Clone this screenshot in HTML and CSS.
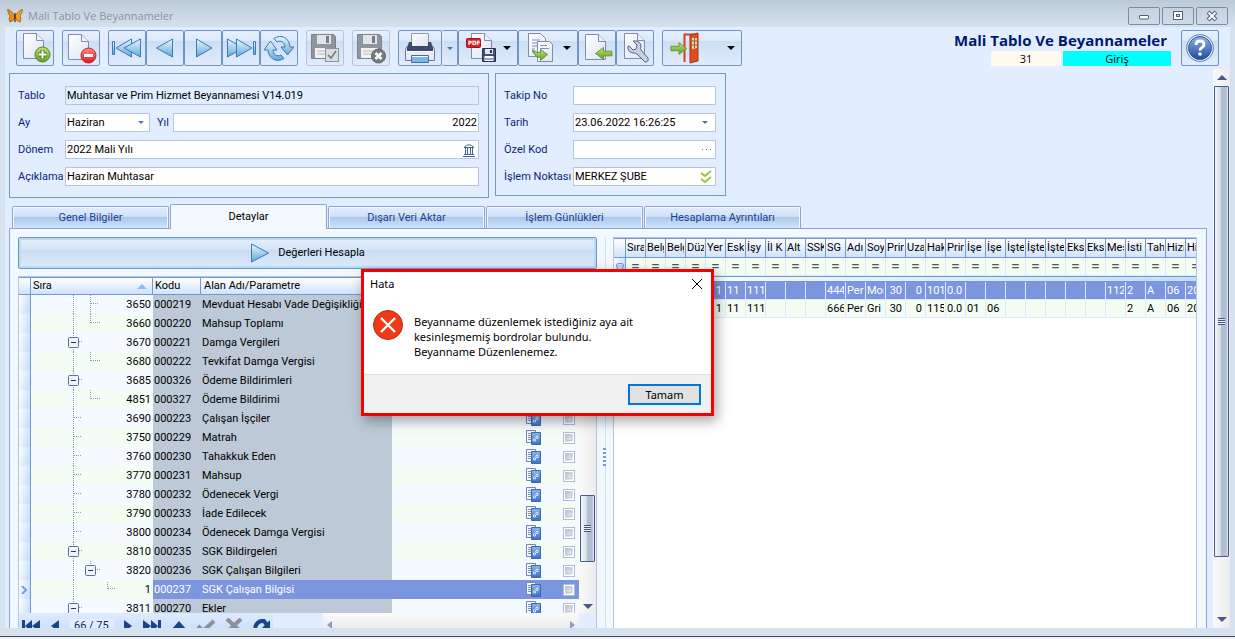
FILE: index.html
```html
<!DOCTYPE html>
<html lang="tr">
<head>
<meta charset="utf-8">
<title>Mali Tablo Ve Beyannameler</title>
<link rel="stylesheet" href="styles.css">
</head>
<body>
<svg class="defs" aria-hidden="true">
  <defs>
    <linearGradient id="gBlue" x1="0" y1="0" x2="0" y2="1"><stop offset="0" stop-color="#e6f6fe"/><stop offset="1" stop-color="#62a9d8"/></linearGradient>
    <linearGradient id="gPage" x1="0" y1="0" x2="1" y2="1"><stop offset="0" stop-color="#fff"/><stop offset="1" stop-color="#dfe3f1"/></linearGradient>
    <linearGradient id="gGreen" x1="0" y1="0" x2="0" y2="1"><stop offset="0" stop-color="#c3e07a"/><stop offset="1" stop-color="#5f9f1c"/></linearGradient>
    <linearGradient id="gRed" x1="0" y1="0" x2="0" y2="1"><stop offset="0" stop-color="#ff8f8a"/><stop offset="1" stop-color="#e0141c"/></linearGradient>
    <linearGradient id="gHelp" x1="0" y1="0" x2="0" y2="1"><stop offset="0" stop-color="#8fb1e4"/><stop offset="1" stop-color="#1f4c9e"/></linearGradient>
    <linearGradient id="gBook" x1="0" y1="0" x2="0" y2="1"><stop offset="0" stop-color="#8db8ea"/><stop offset="1" stop-color="#3b6fc4"/></linearGradient>
    <symbol id="page" viewBox="0 0 32 32"><path d="M5.500 3.500h13l7 7v18h-20z" fill="url(#gPage)" stroke="#7f8bb5"/><path d="M18.500 3.500v7h7" fill="#eef1fa" stroke="#7f8bb5"/></symbol>
    <symbol id="floppy" viewBox="0 0 32 32"><path d="M4.500 4.500h22l2 2v22h-24z" fill="#8f959d" stroke="#7d838b"/><path d="M10 5h14v9H10z" fill="#e2e4e7"/><path d="M19 6h3v7h-3z" fill="#777d86"/><path d="M8 18h17v10H8z" fill="#f1f2f4"/><path d="M10 21h13M10 24h13" stroke="#b4b8bd"/></symbol>
    <symbol id="garrow" viewBox="0 0 20 16"><path d="M19 5.500h-9V1.500L1.500 8l8.500 6.500v-4h9z" fill="url(#gGreen)" stroke="#5d9531"/></symbol>
    <symbol id="card" viewBox="0 0 16 16"><path d="M1.500 .5h9v12h-9z" fill="#f4f7fd" stroke="#6f85bd"/><path d="M3 3.500h3M3 5.500h3M3 7.500h3M3 9.500h3" stroke="#7d93c7"/><path d="M6.500 2.500h9v12h-9z" fill="url(#gBook)" stroke="#4365ae"/><circle cx="9.500" cy="10" r="1.200" fill="none" stroke="#e7f2ff"/><circle cx="12" cy="7.500" r="1.200" fill="none" stroke="#e7f2ff"/></symbol>
    <symbol id="tmid" viewBox="0 0 80 19"><path d="M42.500 0v19M59.500 0v19M60 8.500h8" class="dots"/></symbol>
    <symbol id="tend" viewBox="0 0 80 19"><path d="M42.500 0v19M59.500 0v9M60 8.500h9" class="dots"/></symbol>
    <symbol id="tleaf" viewBox="0 0 80 19"><path d="M42.500 0v19M43 8.500h8" class="dots"/></symbol>
    <symbol id="tdeep" viewBox="0 0 86 19"><path d="M42.500 0v19M76.500 2v7M77 8.500h8" class="dots"/></symbol>
    <symbol id="tnode" viewBox="0 0 80 19"><path d="M42.500 0v19M48 8.500h4" class="dots"/><rect x="37.500" y="4.500" width="10" height="10" rx="1" fill="#eef3fc" stroke="#5c6f96"/><path d="M40 9.500h5" stroke="#26365c"/></symbol>
    <symbol id="tsub" viewBox="0 0 80 19"><path d="M42.500 0v19M59.500 0v4M66 8.500h3" class="dots"/><rect x="54.500" y="4.500" width="10" height="10" rx="1" fill="#eef3fc" stroke="#5c6f96"/><path d="M57 9.500h5" stroke="#26365c"/></symbol>
  </defs>
</svg>

<header class="titlebar">
  <svg class="logo" viewBox="0 0 16 16"><path d="M8 8Q3 1 .5 1.500 1 6 3 8 1 10 3 14 6 14 8 9z" fill="#ef8a12" stroke="#7a4510" stroke-width=".6"/><path d="M8 8q5-7 7.500-6.500Q15 6 13 8q2 2 0 6-3 0-5-5z" fill="#f5a01d" stroke="#7a4510" stroke-width=".6"/><path d="M8 5v9" stroke="#30200f" stroke-width="1.200"/></svg>
  <span class="caption">Mali Tablo Ve Beyannameler</span>
  <div class="winbtns">
    <button aria-label="Simge durumuna küçült"><svg viewBox="0 0 14 12"><rect x="2.500" y="5.500" width="9" height="3.500" rx=".5" fill="#fff" stroke="#56616f"/></svg></button>
    <button aria-label="Ekranı kapla"><svg viewBox="0 0 14 12"><rect x="2.500" y="1.500" width="9" height="8" fill="#fff" stroke="#56616f"/><rect x="5.500" y="4.500" width="3" height="2" fill="#cbd6e2" stroke="#56616f"/></svg></button>
    <button aria-label="Kapat"><svg viewBox="0 0 14 12"><path d="M3 2l8 8M11 2l-8 8" stroke="#56616f" stroke-width="4"/><path d="M3.500 2.500l7 7M10.500 2.500l-7 7" stroke="#fff" stroke-width="1.800"/></svg></button>
  </div>
</header>

<div class="client">
  <div class="toolbar">
    <div class="group"><button class="tb" aria-label="Yeni"><svg viewBox="0 0 32 32"><use href="#page" x="-1" y="-2"/><circle cx="23.500" cy="22.500" r="7.500" fill="url(#gGreen)" stroke="#4f8420"/><path d="M23.500 18v9M19 22.500h9" stroke="#4a7f1c" stroke-width="4"/><path d="M23.500 18.500v8M19.500 22.500h8" stroke="#fff" stroke-width="2"/></svg></button></div>
    <div class="group"><button class="tb" aria-label="Sil"><svg viewBox="0 0 32 32"><use href="#page" x="-2" y="-1"/><circle cx="23.500" cy="23.500" r="7.500" fill="url(#gRed)" stroke="#c2202a"/><rect x="19" y="22" width="9" height="3" fill="#fff"/></svg></button></div>
    <div class="group">
      <button class="tb" aria-label="İlk kayıt"><svg viewBox="0 0 32 32"><g fill="url(#gBlue)" stroke="#3b78b4"><path d="M1.500 9.500h2v13h-2z"/><path d="M20.500 7v18L5 16z"/><path d="M29.500 7v18L13 16z"/></g></svg></button>
      <button class="tb" aria-label="Önceki kayıt"><svg viewBox="0 0 32 32"><path d="M23.500 7v18L7.500 16z" fill="url(#gBlue)" stroke="#3b78b4"/></svg></button>
      <button class="tb" aria-label="Sonraki kayıt"><svg viewBox="0 0 32 32"><path d="M9.500 7v18l15.500-9z" fill="url(#gBlue)" stroke="#3b78b4"/></svg></button>
      <button class="tb" aria-label="Son kayıt"><svg viewBox="0 0 32 32"><g fill="url(#gBlue)" stroke="#3b78b4"><path d="M28.500 9.500h2v13h-2z"/><path d="M2.500 7v18L18 16z"/><path d="M11.500 7v18L27 16z"/></g></svg></button>
      <button class="tb" aria-label="Yenile"><svg viewBox="0 0 32 32"><g fill="url(#gBlue)" stroke="#3b78b4" stroke-linejoin="round"><path d="M11 6.500C18 1.500 26.500 6 27 15h4l-6.500 8L18 15h4c-.5-5-4-7-8-5z"/><path d="M21 26.500C14 31 5.500 27 5 18H1l6.500-9L14 18h-4c.5 5 4 7 8 5z"/></g></svg></button>
    </div>
    <div class="group"><button class="tb off" aria-label="Kaydet" disabled><svg viewBox="0 0 32 32"><use href="#floppy" x="-2" y="-2"/><rect x="16.500" y="16.500" width="13" height="13" fill="#d9dce0" stroke="#8d939b"/><path d="M19 23l3 3 5-7" fill="none" stroke="#70767e" stroke-width="1.500"/></svg></button></div>
    <div class="group"><button class="tb off" aria-label="Vazgeç" disabled><svg viewBox="0 0 32 32"><use href="#floppy" x="-2" y="-2"/><circle cx="23.500" cy="24" r="7" fill="#777c83" stroke="#5f646b"/><path d="M20.500 21l6 6M26.500 21l-6 6" stroke="#fff" stroke-width="2.500"/></svg></button></div>
    <div class="group">
      <button class="tb wide" aria-label="Yazdır"><svg viewBox="0 0 32 32"><path d="M7.500 1.500h17v13h-17z" fill="url(#gPage)" stroke="#8e98bb"/><path d="M3 14.500h26l1.500 3v11h-29v-11z" fill="#e5eaf5" stroke="#6a789e"/><path d="M5 10h3v4h16v-4h3l2 6v3H3v-3z" fill="#3c4b6d"/><path d="M2 19.500h28" stroke="#fff"/><path d="M7.500 23.500h17v7h-17z" fill="#78b7ea" stroke="#506b98"/><path d="M8 24.500h16" stroke="#fff"/></svg></button>
      <button class="tb drop" aria-label="Yazdırma seçenekleri"><i class="tri blue"></i></button>
      <button class="tb menu" aria-label="PDF kaydet"><svg viewBox="0 0 32 32"><use href="#page" x="1" y="-2"/><rect x="1.500" y="6.500" width="14" height="9" rx="1" fill="#cf2731" stroke="#a3131c"/><text x="3" y="13" class="pdf">PDF</text><path d="M17.500 16.500h13v13h-13z" fill="#3f5074" stroke="#26334f"/><path d="M20 17h8v5h-8z" fill="#dfe6f3"/><path d="M25 18h2v3h-2z" fill="#26334f"/><path d="M19.500 24h9v5h-9z" fill="#fff"/><path d="M19.500 27h9" stroke="#86a4d4" stroke-width="2"/></svg><i class="tri"></i></button>
      <button class="tb menu" aria-label="Kopyala"><svg viewBox="0 0 32 32"><path d="M3.500 1.500h12l5 5v18h-17z" fill="url(#gPage)" stroke="#7f8bb5"/><path d="M7 8h8M7 11h8M7 14h6M7 17h3M7 20h3" stroke="#8490b8"/><path d="M12.500 9.500h12l3 3v17h-15z" fill="url(#gPage)" stroke="#7f8bb5"/><path d="M15 13.500h7M15 16.500h9" stroke="#8490b8"/><path d="M7.500 18q4 3 8 2.500v-3l7 5-7 6v-3q-6 0-8-7.500z" fill="url(#gGreen)" stroke="#5d9531"/></svg><i class="tri"></i></button>
      <button class="tb" aria-label="İçeri al"><svg viewBox="0 0 32 32"><use href="#page" x="-1" y="-1"/><use href="#garrow" x="13" y="14" width="19" height="15"/></svg></button>
      <button class="tb" aria-label="Ayarlar"><svg viewBox="0 0 32 32"><use href="#page" x="0" y="-2"/><path d="M10 11l4 4 3-1 1-4-4-4q7-1 8 5-1 3 0 4l7 8q1 4-3 4l-8-8q-1-1-4-1-6-1-5-7z" transform="translate(0 3)" fill="#c9cfdf" stroke="#59648a"/></svg></button>
    </div>
    <div class="group"><button class="tb exit" aria-label="Çıkış"><svg viewBox="0 0 32 32"><path d="M15.500 30V2.500H28" fill="none" stroke="#d2421e" stroke-width="2"/><path d="M21 3l8-2v28l-8 2z" fill="#dc4d22" stroke="#b03312"/><path d="M23 6h5v10l-5 1z" fill="#f3dcae"/><path d="M25.500 6v10M23 9h5M23 13h5" stroke="#a3532c"/><use href="#garrow" x="-19" y="9" width="18" height="15" transform="scale(-1 1)"/></svg><i class="tri"></i></button></div>
    <div class="screen">
      <h1>Mali Tablo Ve Beyannameler</h1>
      <div class="status"><span class="no">31</span><span class="mode">Giriş</span></div>
    </div>
    <button class="tb" aria-label="Yardım"><svg viewBox="0 0 32 32"><circle cx="16" cy="16" r="13.500" fill="#f3f6fc" stroke="#5b7cb8"/><circle cx="16" cy="16" r="11.500" fill="url(#gHelp)" stroke="#2d569f"/><path d="M12 13q0-4 4-4t4 3.500q0 2-2 3t-2 3" fill="none" stroke="#fff" stroke-width="2.800"/><circle cx="16" cy="22" r="1.800" fill="#fff"/></svg></button>
  </div>

  <div class="body">
    <main class="content">
      <form class="panels">
        <section class="panel main-panel">
          <div class="row"><label for="tablo">Tablo</label><input id="tablo" class="field ro" value="Muhtasar ve Prim Hizmet Beyannamesi V14.019" readonly></div>
          <div class="row"><label for="ay">Ay</label><span class="box month"><select id="ay"><option>Haziran</option></select><i class="tri blue"></i></span><label for="yil" class="year">Yıl</label><input id="yil" class="field num" value="2022"></div>
          <div class="row"><label for="donem">Dönem</label><span class="box"><input id="donem" value="2022 Mali Yılı"><svg class="fi" viewBox="0 0 14 14"><path d="M2 4.500Q7-1 12 4.500zM1 13.500h12M2 11.500h10M3.500 5v6M5.500 5v6M8.500 5v6M10.500 5v6" fill="none" stroke="#3f6493"/></svg></span></div>
          <div class="row"><label for="aciklama">Açıklama</label><input id="aciklama" class="field" value="Haziran Muhtasar"></div>
        </section>
        <section class="panel side-panel">
          <div class="row"><label for="takip">Takip No</label><input id="takip" class="field"></div>
          <div class="row"><label for="tarih">Tarih</label><span class="box"><input id="tarih" value="23.06.2022 16:26:25"><i class="tri blue"></i></span></div>
          <div class="row"><label for="ozel">Özel Kod</label><span class="box"><input id="ozel"><i class="more"></i></span></div>
          <div class="row"><label for="islem">İşlem Noktası</label><span class="box"><input id="islem" value="MERKEZ ŞUBE"><svg class="fi" viewBox="0 0 14 14"><path d="M2 3l4 3 6-5M2 9l4 3 6-5" fill="none" stroke="#9bc53a" stroke-width="2"/></svg></span></div>
        </section>
      </form>

      <nav class="tabs" role="tablist">
        <button role="tab">Genel Bilgiler</button>
        <button role="tab" class="active" aria-selected="true">Detaylar</button>
        <button role="tab">Dışarı Veri Aktar</button>
        <button role="tab">İşlem Günlükleri</button>
        <button role="tab">Hesaplama Ayrıntıları</button>
      </nav>

      <div class="tabpage">
        <div class="left">
          <button class="calc"><svg viewBox="0 0 20 20"><path d="M1.500 1v18l17-9z" fill="url(#gBlue)" stroke="#3b78b4"/></svg>Değerleri Hesapla</button>
          <div class="tree">
            <div class="treebody">
              <div class="rows">
                <table class="tt">
                  <colgroup><col class="c-ind"><col class="c-no"><col class="c-code"><col class="c-name"><col><col class="c-card"><col class="c-chk"></colgroup>
                  <thead><tr><th></th><th>Sıra<i class="sort"></i></th><th>Kodu</th><th>Alan Adı/Parametre</th><th></th><th></th><th></th></tr></thead>
                  <tbody>
                    <tr><td></td><td><svg><use href="#tmid"/></svg>3650</td><td>000219</td><td>Mevduat Hesabı Vade Değişikliği M</td><td></td><td><svg><use href="#card"/></svg></td><td><input type="checkbox" aria-label="3650"></td></tr>
                    <tr><td></td><td><svg><use href="#tend"/></svg>3660</td><td>000220</td><td>Mahsup Toplamı</td><td></td><td><svg><use href="#card"/></svg></td><td><input type="checkbox" aria-label="3660"></td></tr>
                    <tr><td></td><td><svg><use href="#tnode"/></svg>3670</td><td>000221</td><td>Damga Vergileri</td><td></td><td><svg><use href="#card"/></svg></td><td><input type="checkbox" aria-label="3670"></td></tr>
                    <tr><td></td><td><svg><use href="#tend"/></svg>3680</td><td>000222</td><td>Tevkifat Damga Vergisi</td><td></td><td><svg><use href="#card"/></svg></td><td><input type="checkbox" aria-label="3680"></td></tr>
                    <tr><td></td><td><svg><use href="#tnode"/></svg>3685</td><td>000326</td><td>Ödeme Bildirimleri</td><td></td><td><svg><use href="#card"/></svg></td><td><input type="checkbox" aria-label="3685"></td></tr>
                    <tr><td></td><td><svg><use href="#tend"/></svg>4851</td><td>000327</td><td>Ödeme Bildirimi</td><td></td><td><svg><use href="#card"/></svg></td><td><input type="checkbox" aria-label="4851"></td></tr>
                    <tr><td></td><td><svg><use href="#tleaf"/></svg>3690</td><td>000223</td><td>Çalışan İşçiler</td><td></td><td><svg><use href="#card"/></svg></td><td><input type="checkbox" aria-label="3690"></td></tr>
                    <tr><td></td><td><svg><use href="#tleaf"/></svg>3750</td><td>000229</td><td>Matrah</td><td></td><td><svg><use href="#card"/></svg></td><td><input type="checkbox" aria-label="3750"></td></tr>
                    <tr><td></td><td><svg><use href="#tleaf"/></svg>3760</td><td>000230</td><td>Tahakkuk Eden</td><td></td><td><svg><use href="#card"/></svg></td><td><input type="checkbox" aria-label="3760"></td></tr>
                    <tr><td></td><td><svg><use href="#tleaf"/></svg>3770</td><td>000231</td><td>Mahsup</td><td></td><td><svg><use href="#card"/></svg></td><td><input type="checkbox" aria-label="3770"></td></tr>
                    <tr><td></td><td><svg><use href="#tleaf"/></svg>3780</td><td>000232</td><td>Ödenecek Vergi</td><td></td><td><svg><use href="#card"/></svg></td><td><input type="checkbox" aria-label="3780"></td></tr>
                    <tr><td></td><td><svg><use href="#tleaf"/></svg>3790</td><td>000233</td><td>İade Edilecek</td><td></td><td><svg><use href="#card"/></svg></td><td><input type="checkbox" aria-label="3790"></td></tr>
                    <tr><td></td><td><svg><use href="#tleaf"/></svg>3800</td><td>000234</td><td>Ödenecek Damga Vergisi</td><td></td><td><svg><use href="#card"/></svg></td><td><input type="checkbox" aria-label="3800"></td></tr>
                    <tr><td></td><td><svg><use href="#tnode"/></svg>3810</td><td>000235</td><td>SGK Bildirgeleri</td><td></td><td><svg><use href="#card"/></svg></td><td><input type="checkbox" aria-label="3810"></td></tr>
                    <tr><td></td><td><svg><use href="#tsub"/></svg>3820</td><td>000236</td><td>SGK Çalışan Bilgileri</td><td></td><td><svg><use href="#card"/></svg></td><td><input type="checkbox" aria-label="3820"></td></tr>
                    <tr class="sel"><td><svg viewBox="0 0 8 8"><path d="M2 0l4 4-4 4" fill="none" stroke="#6f9fe8" stroke-width="2"/></svg></td><td><svg class="deep"><use href="#tdeep"/></svg>1</td><td>000237</td><td>SGK Çalışan Bilgisi</td><td></td><td><svg><use href="#card"/></svg></td><td><input type="checkbox" aria-label="1"></td></tr>
                    <tr><td></td><td><svg><use href="#tnode"/></svg>3811</td><td>000270</td><td>Ekler</td><td></td><td><svg><use href="#card"/></svg></td><td><input type="checkbox" aria-label="3811"></td></tr>
                  </tbody>
                </table>
              </div>
              <div class="vbar inner"><span class="thumb"><i></i></span><span class="down"></span></div>
            </div>
            <div class="navrow">
              <div class="navigator">
                <button aria-label="İlk"><svg viewBox="0 0 20 16"><path d="M1 2h3v12H1zM11 2v12L4 8zM19 2v12l-8-6z" fill="#1d4489"/></svg></button>
                <button aria-label="Önceki"><svg viewBox="0 0 12 16"><path d="M10 2v12L2 8z" fill="#1d4489"/></svg></button>
                <span class="count">66 / 75</span>
                <button aria-label="Sonraki"><svg viewBox="0 0 12 16"><path d="M2 2v12l8-6z" fill="#1d4489"/></svg></button>
                <button aria-label="Son"><svg viewBox="0 0 20 16"><path d="M16 2h3v12h-3zM9 2v12l7-6zM1 2v12l8-6z" fill="#1d4489"/></svg></button>
                <button aria-label="Yukarı"><svg viewBox="0 0 18 16"><path d="M1 12l8-9 8 9z" fill="#1d4489"/></svg></button>
                <button aria-label="Onayla"><svg viewBox="0 0 20 16"><path d="M2 8l5 5L18 3" fill="none" stroke="#8e9097" stroke-width="4"/></svg></button>
                <button aria-label="İptal"><svg viewBox="0 0 20 16"><path d="M3 1l14 13M17 1L3 14" stroke="#8e9097" stroke-width="4"/></svg></button>
                <button aria-label="Tazele"><svg viewBox="0 0 20 16"><path d="M3 10q2-8 9-7l3 4" fill="none" stroke="#1d4489" stroke-width="4"/><path d="M18 2v9H9z" fill="#1d4489"/></svg></button>
              </div>
              <div class="hbar"><i class="la"></i><i class="ra"></i></div>
              <span class="corner"></span>
            </div>
          </div>
        </div>
        <div class="splitter"><i></i></div>
        <div class="right">
          <table class="gt">
            <thead>
              <tr><th></th><th>Sıra</th><th>Belg</th><th>Belg</th><th>Düz</th><th>Yer</th><th>Esk</th><th>İşy</th><th>İl K</th><th>Alt</th><th>SSK</th><th>SG</th><th>Adı</th><th>Soy</th><th>Prin</th><th>Uza</th><th>Hak</th><th>Prin</th><th>İşe</th><th>İşe</th><th>İşte</th><th>İşte</th><th>İşte</th><th>Eks</th><th>Eks</th><th>Mes</th><th>İsti</th><th>Tah</th><th>Hizı</th><th>Hi</th></tr>
            </thead>
            <tbody>
              <tr class="filter"><td><svg viewBox="0 0 10 10"><ellipse cx="5" cy="3" rx="3.500" ry="1.500" fill="none" stroke="#5a8fdd"/><path d="M1.500 3l1 5h5l1-5" fill="#b8d4fa" stroke="#5a8fdd"/></svg></td><td>=</td><td>=</td><td>=</td><td>=</td><td>=</td><td>=</td><td>=</td><td>=</td><td>=</td><td>=</td><td>=</td><td>=</td><td>=</td><td>=</td><td>=</td><td>=</td><td>=</td><td>=</td><td>=</td><td>=</td><td>=</td><td>=</td><td>=</td><td>=</td><td>=</td><td>=</td><td>=</td><td>=</td><td>=</td></tr>
              <tr class="band"><td colspan="30"></td></tr>
              <tr class="on"><td></td><td></td><td></td><td></td><td></td><td class="r">1</td><td>11</td><td>111</td><td></td><td></td><td></td><td>444</td><td>Per</td><td>Mor</td><td class="r">30</td><td class="r">0</td><td>101</td><td>0.0</td><td></td><td></td><td></td><td></td><td></td><td></td><td></td><td>112</td><td>2</td><td>A</td><td>06</td><td>20</td></tr>
              <tr><td></td><td></td><td></td><td></td><td></td><td class="r">1</td><td>11</td><td>111</td><td></td><td></td><td></td><td>666</td><td>Per</td><td>Gri</td><td class="r">30</td><td class="r">0</td><td>115</td><td>0.0</td><td>01</td><td>06</td><td></td><td></td><td></td><td></td><td></td><td></td><td>2</td><td>A</td><td>06</td><td>20</td></tr>
            </tbody>
          </table>
        </div>
      </div>
    </main>
    <div class="vbar outer"><span class="up"></span><span class="thumb"><i></i></span><span class="down"></span></div>
  </div>
</div>

<div class="dialog" role="alertdialog" aria-labelledby="dt" aria-describedby="dm">
  <div class="dhead"><span id="dt">Hata</span><button aria-label="Kapat"><svg viewBox="0 0 12 12"><path d="M1 1l10 10M11 1L1 11" stroke="#000"/></svg></button></div>
  <div class="dmsg">
    <svg viewBox="0 0 32 32"><circle cx="16" cy="16" r="15.500" fill="#f03a17" stroke="#b02a12"/><path d="M8.500 8.500l15 15M23.500 8.500l-15 15" stroke="#fff" stroke-width="2.500"/></svg>
    <p id="dm">Beyanname düzenlemek istediğiniz aya ait<br>kesinleşmemiş bordrolar bulundu.<br>Beyanname Düzenlenemez.</p>
  </div>
  <div class="dfoot"><button>Tamam</button></div>
</div>
</body>
</html>
```
FILE: styles.css
```css
:root {
  --ui: Roboto, "Liberation Sans", sans-serif;
  --win: "Open Sans", "Noto Sans", sans-serif;
  --dlg: "Noto Sans", "Open Sans", sans-serif;
  --line: #6f9ad3;
  --soft: #b4c6e0;
}
* { box-sizing: border-box; }
body { margin: 0; height: 100vh; display: flex; flex-direction: column; overflow: hidden; position: relative; background: #d6e2ef; border-bottom: 2px solid #eef3f9; font: 11px/14px var(--ui); color: #000; }
body::after { content: ""; height: 8px; flex: none; border-bottom: 1px solid #4a4a50; background: #d6e2ef; }
button, input, select { font: inherit; color: inherit; margin: 0; padding: 0; }
button { cursor: default; }
.defs { position: absolute; width: 0; height: 0; }
.dots { fill: none; stroke: #7d9cc6; stroke-dasharray: 1 1; }

.titlebar { flex: none; height: 27px; display: flex; align-items: center; padding: 4px 7px 0; background: linear-gradient(#bccad8, #d5e1ed); font: 11px/16px var(--win); color: #8c9299; }
.logo { width: 16px; height: 16px; margin-right: 5px; }
.caption { flex: 1; }
.winbtns { display: flex; gap: 2px; }
.winbtns button { width: 32px; height: 18px; display: grid; place-items: center; border: 1px solid #7e8da0; border-radius: 2px; background: linear-gradient(#c5d1de, #cfdbe8); }
.winbtns svg { width: 14px; height: 12px; }

.client { flex: 1; min-height: 0; margin: 0 5px; display: flex; flex-direction: column; background: #e2eeff; }
.toolbar { flex: none; display: flex; gap: 8px; padding: 3px 11px 3px; align-items: flex-start; }
.group { display: flex; }
.tb { width: 38px; height: 36px; display: flex; align-items: center; justify-content: center; flex: none; border: 1px solid #7494c0; border-radius: 2px; background: linear-gradient(#e6f0fd 0, #dce9fa 28%, #cddef4 30%, #e0ecfc 100%); }
.tb svg { width: 32px; height: 32px; flex: none; }
.tb.off { border-color: #b9c7dc; }
.tb.wide { width: 44px; }
.tb.drop { width: 16px; border-left: 0; }
.tb.menu { width: 60px; justify-content: space-between; padding: 0 6px; }
.tb.exit { width: 80px; justify-content: space-between; padding: 0 6px; }
.pdf { font: bold 6px "DejaVu Sans Condensed", sans-serif; fill: #fff; }
.tri { flex: none; border: 4px solid transparent; border-top-color: #000; border-bottom: 0; }
.tri.blue { border-width: 3px 3px 0; border-top-color: #4a75ad; }
.screen { flex: 1; padding-right: 2px; display: flex; flex-direction: column; align-items: flex-end; }
.screen h1 { margin: 0 4px 0 0; font: bold 15px/21px var(--win); color: #001a70; }
.status { display: flex; gap: 2px; }
.status span { height: 15px; line-height: 15px; text-align: center; font-family: var(--win); }
.no { width: 70px; background: #fffaf0; }
.mode { width: 108px; background: #00ffff; }

.body { flex: 1; min-height: 0; display: flex; }
.content { flex: 1; min-width: 0; display: flex; flex-direction: column; padding: 4px 6px 0 4px; }
.panels { display: flex; gap: 6px; align-items: flex-start; }
.panel { border: 1px solid var(--line); padding: 12px 9px 11px 8px; display: flex; flex-direction: column; gap: 8px; }
.main-panel { width: 480px; }
.side-panel { width: 231px; padding-bottom: 9px; }
.row { display: flex; align-items: center; height: 19px; }
.row label { width: 47px; flex: none; color: #0b1f7c; white-space: nowrap; }
.side-panel .row label { width: 69px; }
.row label.year { width: 23px; padding-left: 7px; }
.field, .box { flex: 1; min-width: 0; height: 19px; border: 1px solid var(--soft); background: #fff; border-radius: 0; padding: 0 1px; }
.field.ro { background: #e2eeff; }
.field.num { text-align: right; }
.box { display: flex; align-items: center; padding-right: 7px; }
.box input, .box select { flex: 1; min-width: 0; width: 0; border: 0; background: none; appearance: none; height: 17px; outline: 0; }
.box.month { flex: none; width: 85px; padding-right: 5px; }
.fi { width: 14px; height: 14px; flex: none; margin-right: -5px; }
.more { width: 9px; height: 1px; background: repeating-linear-gradient(90deg, #5d7fae 0 1px, transparent 1px 4px); margin-right: -3px; }

.tabs { display: flex; gap: 1px; padding: 6px 3px 0; align-items: flex-end; }
.tabs button { width: 157px; height: 22px; border: 1px solid #8fa5cd; border-bottom: 0; border-radius: 2px 2px 0 0; background: linear-gradient(#e4eefb 0, #cfe0f6 45%, #adc8ec 50%, #cfe2fa 100%); box-shadow: inset 1px 1px #f1f7fe, inset -1px 0 #f1f7fe; color: #1c3f94; }
.tabs .active { height: 25px; margin-bottom: -1px; background: #f4f8ff; color: #000; position: relative; }
.tabpage { flex: 1; min-height: 0; display: flex; border: 1px solid #8fa5cd; border-bottom: 0; background: #f2f8ff; padding: 8px 9px 0 8px; }

.left { width: 579px; flex: none; display: flex; flex-direction: column; gap: 7px; }
.calc { height: 32px; flex: none; display: flex; align-items: center; justify-content: center; gap: 8px; border: 1px solid #7494c0; border-radius: 2px; box-shadow: inset 0 0 0 2px #b9dcfa; background: linear-gradient(#e4effd 0, #d8e6f8 35%, #cbdcf3 40%, #deeafb 100%); }
.calc svg { width: 20px; height: 20px; }
.tree { flex: 1; min-height: 0; display: flex; flex-direction: column; border: 1px solid var(--soft); border-bottom: 0; background: #e2eeff; }
.treebody { flex: 1; min-height: 0; display: flex; }
.rows { flex: 1; min-width: 0; overflow: hidden; }
.tt, .gt { border-collapse: separate; border-spacing: 0; table-layout: fixed; width: 100%; }
.c-ind { width: 12px; } .c-no { width: 122px; } .c-code { width: 48px; } .c-name { width: 191px; } .c-card { width: 37px; } .c-chk { width: 17px; }
.tt th { height: 18px; padding: 0 0 0 3px; text-align: left; font-weight: normal; background: linear-gradient(#fff, #cfe2fd); border: solid var(--line); border-width: 1px 0 1px 0; overflow: hidden; white-space: nowrap; }
.tt th:nth-child(-n+3) { border-right-width: 1px; padding-left: 2px; }
.sort { float: right; margin: 5px 5px 0 0; border: 5px solid transparent; border-bottom-color: #8fbcf8; border-top: 0; }
.tt td { height: 19px; padding: 0 0 0 1px; overflow: hidden; white-space: nowrap; line-height: 19px; }
.tt tr { background: #f4faff; }
.tt tbody tr:nth-child(even) { background: #f4fdf3; }
.tt td:first-child { background: linear-gradient(100deg, #fff, #c3dbfd); border-right: 1px solid var(--line); }
.tt td:first-child svg { width: 8px; height: 8px; display: block; }
.tt td:nth-child(2) { text-align: right; padding: 0 2px 0 0; }
.tt td:nth-child(2) svg { float: left; width: 80px; height: 19px; }
.tt td:nth-child(2) .deep { width: 86px; }
.tt td:nth-child(3), .tt td:nth-child(4) { background: #bdc9d6; }
.tt td:nth-child(6) { padding: 0; }
.tt td:nth-child(6) svg { width: 16px; height: 16px; display: block; }
.tt .sel td:nth-child(n+3) { background: #7b95de; color: #fff; }
.tt .sel td:nth-child(2) { background: #f4fdf3; }
.tt input { appearance: none; display: block; width: 12px; height: 12px; margin: 0; padding: 1px; border: 1px solid #a9bddd; background: linear-gradient(135deg, #b4b8c0, #fafafa) content-box, #fff; outline: 1px solid #c3cad6; outline-offset: -4px; }

.vbar { width: 17px; flex: none; display: flex; flex-direction: column; background: linear-gradient(90deg, #f9f9f9, #ececec); }
.thumb { display: grid; place-items: center; border: 1px solid #4a5d92; border-radius: 1px; background: linear-gradient(90deg, #eef2f7 0 10%, #d3dbe6 45%, #b0bfd1 50% 85%, #dfe6ef); margin: 0 1px; }
.thumb i { width: 7px; height: 7px; background: repeating-linear-gradient(#40588a 0 1px, #e4eaf2 1px 2px); }
.up, .down { align-self: center; border: 5px solid transparent; }
.up { border-bottom-color: #46598a; border-top: 0; margin: 6px 0; }
.down { border-top-color: #46598a; border-bottom: 0; margin: auto 0 6px; }
.inner::before { content: ""; flex: 219 0 0; }
.inner .thumb { flex: 65 0 0; }
.inner .down { margin: 42px 0 4px; }
.outer .thumb { flex: 472 0 0; }
.outer .down { margin-top: 60px; }

.navrow { flex: none; height: 15px; display: flex; overflow: hidden; align-items: flex-start; }
.navigator { flex: none; width: 254px; display: flex; gap: 8px; padding: 5px 2px 0; background: linear-gradient(#deebfe, #c3dafc); height: 24px; }
.navigator button { border: 0; background: none; display: block; height: 16px; }
.navigator svg { height: 16px; display: block; }
.count { background: #e2eeff; margin-top: 1px; padding: 0 5px; color: #0b1f5c; white-space: nowrap; }
.hbar { flex: 1; margin-left: 50px; height: 16px; display: flex; justify-content: space-between; padding: 8px 4px 0; background: linear-gradient(#fafafa, #ececec); }
.la, .ra { width: 0; height: 0; border: 4px solid transparent; }
.la { border-right: 5px solid #8a9cc4; border-left: 0; }
.ra { border-left: 5px solid #8a9cc4; border-right: 0; }
.corner { width: 17px; flex: none; }

.splitter { width: 16px; flex: none; display: grid; place-items: center; padding-right: 2px; background: linear-gradient(90deg, transparent 8px, #cfe2fb 8px 9px, transparent 9px); }
.splitter i { width: 3px; height: 18px; background: repeating-linear-gradient(#6b9be0 0 2px, #f2f8ff 2px 4px); margin-top: 48px; }
.right { flex: 1; min-width: 0; overflow: hidden; background: #fff; border: 1px solid var(--soft); border-bottom: 0; }
.gt { width: 592px; }
.gt th, .gt td { width: 20px; overflow: clip; overflow-clip-margin: content-box; white-space: nowrap; padding: 0 1px; text-align: left; font-weight: normal; }
.gt th:first-child, .gt td:first-child { width: 12px; border-right-color: var(--line); }
.gt th { height: 20px; background: linear-gradient(#fff, #cfe2fd); border: solid var(--line); border-width: 1px 1px 1px 0; }
.gt td { height: 18px; background: #f4fdf3; border: solid #deebfd; border-width: 0 1px 1px 0; }
.gt .filter td { text-align: center; color: #555; font-size: 16px; }
.gt .filter svg { width: 10px; height: 10px; display: block; }
.gt .band td { height: 6px; background: linear-gradient(#cfe0f8, #fff 50%, #cfe0f8); border: solid var(--line); border-width: 1px 0; }
.gt .on td { background: #7b95de; color: #fff; }
.gt td.r { text-align: right; padding-right: 3px; }
.gt td:first-child { background: linear-gradient(100deg, #fff, #c3dbfd); }

.dialog { position: absolute; left: 361px; top: 269px; width: 353px; border: 3px solid #f80000; background: #fff; font-family: var(--dlg); box-shadow: 3px 5px 12px rgba(0, 0, 0, .35); }
.dhead { display: flex; justify-content: space-between; align-items: center; padding: 5px 8px 0 6px; }
.dhead button { border: 0; background: none; width: 12px; height: 12px; }
.dhead svg { width: 12px; height: 12px; display: block; }
.dmsg { display: flex; gap: 11px; padding: 19px 9px 15px; }
.dmsg svg { width: 30px; height: 30px; flex: none; }
.dmsg p { margin: 4px 0 0; line-height: 15px; white-space: nowrap; }
.dfoot { border-top: 1px solid #dfdfdf; background: #f0f0f0; padding: 9px 10px 8px; display: flex; justify-content: flex-end; }
.dfoot button { width: 73px; height: 21px; border: 2px solid #0078d7; background: #e1e1e1; }
```
